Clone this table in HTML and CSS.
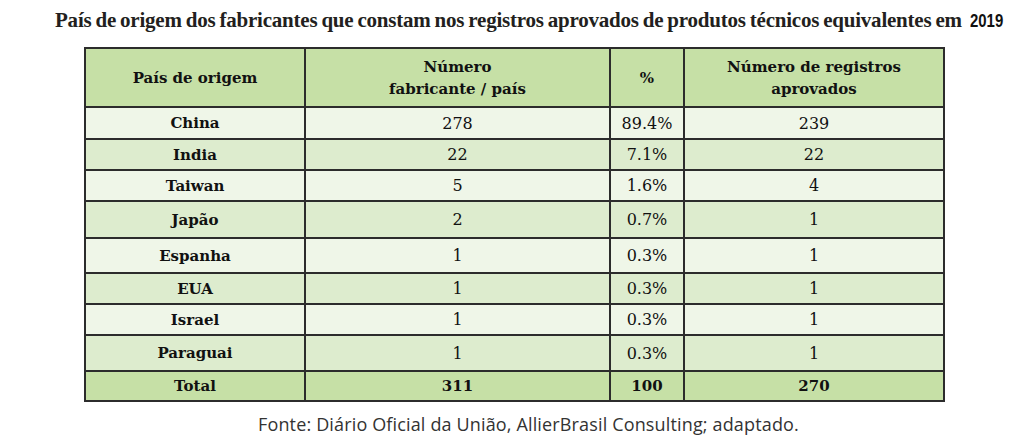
FILE: index.html
```html
<!DOCTYPE html>
<html lang="pt">
<head>
<meta charset="utf-8">
<title>País de origem dos fabricantes</title>
<link rel="stylesheet" href="styles.css">
</head>
<body>
<h1 class="title"><span class="title-text">País de origem dos fabricantes que constam nos registros aprovados de produtos técnicos equivalentes em</span> <span class="title-year">2019</span></h1>
<table class="data">
  <thead>
    <tr class="row-head">
      <th class="c1">País de origem</th>
      <th class="c2">Número<br>fabricante / país</th>
      <th class="c3">%</th>
      <th class="c4">Número de registros<br>aprovados</th>
    </tr>
  </thead>
  <tbody>
    <tr class="row-light h32"><th>China</th><td>278</td><td>89.4%</td><td>239</td></tr>
    <tr class="row-mid h31"><th>India</th><td>22</td><td>7.1%</td><td>22</td></tr>
    <tr class="row-light h31"><th>Taiwan</th><td>5</td><td>1.6%</td><td>4</td></tr>
    <tr class="row-mid h37"><th>Japão</th><td>2</td><td>0.7%</td><td>1</td></tr>
    <tr class="row-light h35"><th>Espanha</th><td>1</td><td>0.3%</td><td>1</td></tr>
    <tr class="row-mid h31"><th>EUA</th><td>1</td><td>0.3%</td><td>1</td></tr>
    <tr class="row-light h31"><th>Israel</th><td>1</td><td>0.3%</td><td>1</td></tr>
    <tr class="row-mid h36"><th>Paraguai</th><td>1</td><td>0.3%</td><td>1</td></tr>
    <tr class="row-total h30"><th>Total</th><td>311</td><td>100</td><td>270</td></tr>
  </tbody>
</table>
<p class="source">Fonte: Diário Oficial da União, AllierBrasil Consulting; adaptado.</p>
</body>
</html>
```
FILE: styles.css
```css
html, body {
  margin: 0;
  padding: 0;
  background: #ffffff;
}

.title {
  margin: 0;
  padding: 5px 0 0 55px;
  height: 47px;
  box-sizing: border-box;
  white-space: nowrap;
  font-weight: bold;
  line-height: 22px;
  color: #231f20;
}

.title-text {
  font-family: "Liberation Serif", serif;
  font-size: 21px;
  letter-spacing: -0.22px;
  word-spacing: -1px;
}

.title-year {
  display: inline-block;
  font-family: "Liberation Sans", Arial, sans-serif;
  font-size: 18px;
  color: #111;
  transform: scaleX(0.83);
  transform-origin: left center;
}

.data {
  margin: 0 0 0 84px;
  width: 859px;
  border-collapse: collapse;
  table-layout: fixed;
  font-family: "DejaVu Serif", serif;
  font-size: 16px;
  color: #111;
  text-align: center;
}

.data th,
.data td {
  border: 2px solid #2c2c2c;
  padding: 0;
  text-align: center;
  vertical-align: middle;
}

.data th {
  font-weight: bold;
  font-size: 15px;
}
.data td { font-weight: normal; }

.c1 { width: 218px; }
.c2 { width: 303px; }
.c3 { width: 72px; }
.c4 { width: 258px; }

.row-head { height: 59px; }
.row-head th { line-height: 22px; }

.row-head, .row-total { background: #c6e0a6; }
.row-light { background: #eff6e8; }
.row-mid { background: #ddecce; }

.row-total td {
  font-weight: bold;
  font-size: 15px;
}

.h30 { height: 30px; }
.h31 { height: 31px; }
.h32 { height: 32px; }
.h35 { height: 35px; }
.h36 { height: 36px; }
.h37 { height: 37px; }

.source {
  margin: 10px 0 0 258px;
  font-family: "Open Sans", "Noto Sans", sans-serif;
  font-size: 18px;
  letter-spacing: 0.15px;
  line-height: 24px;
  color: #333;
  white-space: nowrap;
}
```
